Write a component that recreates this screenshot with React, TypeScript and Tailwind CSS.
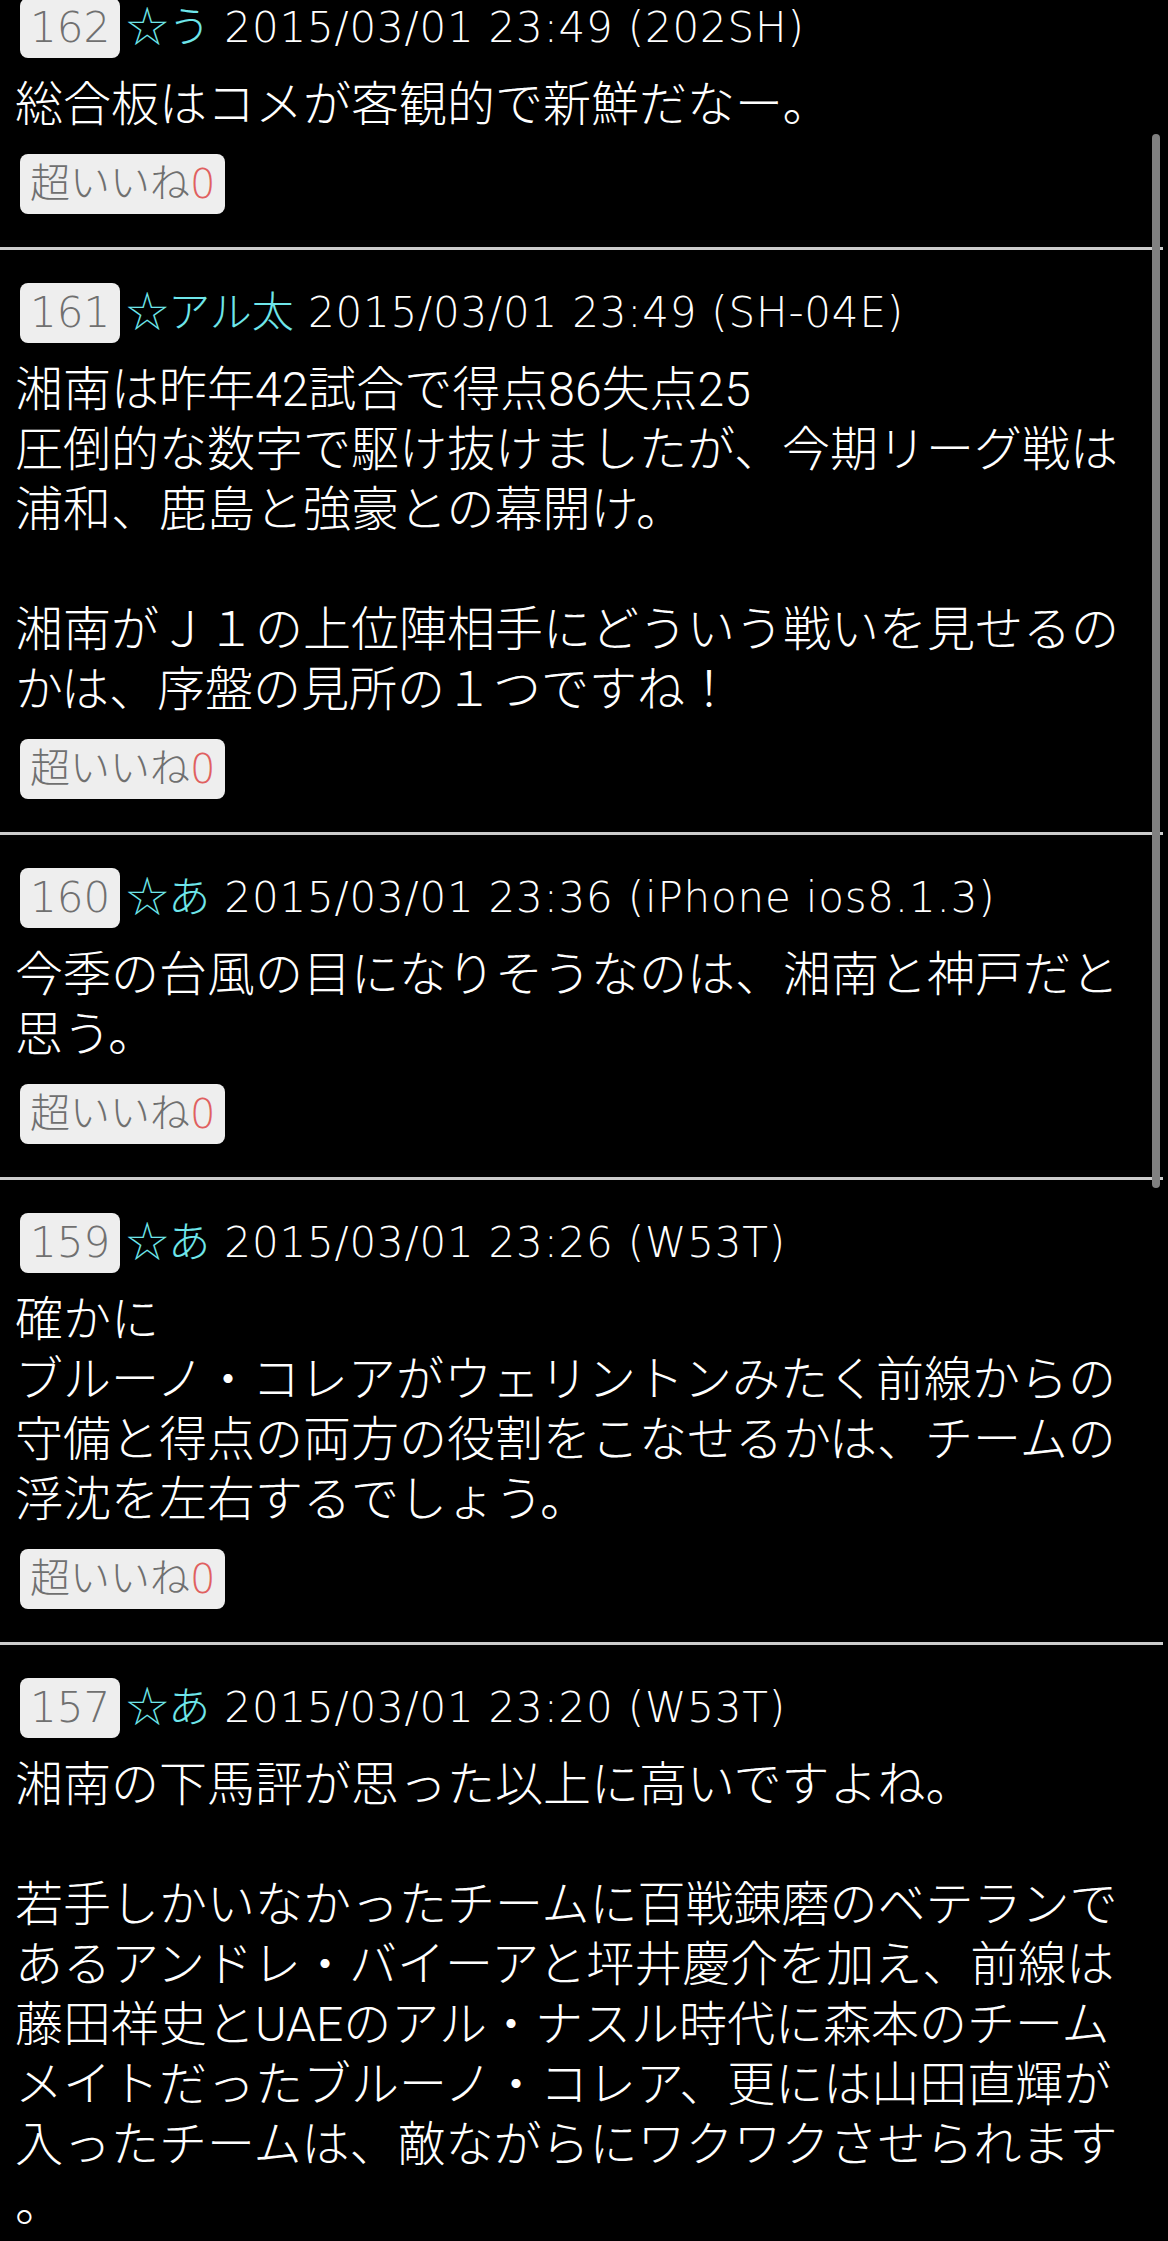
import React from "react";

interface Post {
  no: number;
  name: string;
  date: string;
  device: string;
  lines: string[];
  likes: number;
}

const posts: Post[] = [
  {
    no: 162,
    name: "う",
    date: "2015/03/01 23:49",
    device: "202SH",
    lines: ["総合板はコメが客観的で新鮮だなー。"],
    likes: 0,
  },
  {
    no: 161,
    name: "アル太",
    date: "2015/03/01 23:49",
    device: "SH-04E",
    lines: [
      "湘南は昨年42試合で得点86失点25",
      "圧倒的な数字で駆け抜けましたが、今期リーグ戦は",
      "浦和、鹿島と強豪との幕開け。",
      "",
      "湘南がＪ１の上位陣相手にどういう戦いを見せるの",
      "かは、序盤の見所の１つですね！",
    ],
    likes: 0,
  },
  {
    no: 160,
    name: "あ",
    date: "2015/03/01 23:36",
    device: "iPhone ios8.1.3",
    lines: ["今季の台風の目になりそうなのは、湘南と神戸だと", "思う。"],
    likes: 0,
  },
  {
    no: 159,
    name: "あ",
    date: "2015/03/01 23:26",
    device: "W53T",
    lines: [
      "確かに",
      "ブルーノ・コレアがウェリントンみたく前線からの",
      "守備と得点の両方の役割をこなせるかは、チームの",
      "浮沈を左右するでしょう。",
    ],
    likes: 0,
  },
  {
    no: 157,
    name: "あ",
    date: "2015/03/01 23:20",
    device: "W53T",
    lines: [
      "湘南の下馬評が思った以上に高いですよね。",
      "",
      "若手しかいなかったチームに百戦錬磨のベテランで",
      "あるアンドレ・バイーアと坪井慶介を加え、前線は",
      "藤田祥史とUAEのアル・ナスル時代に森本のチーム",
      "メイトだったブルーノ・コレア、更には山田直輝が",
      "入ったチームは、敵ながらにワクワクさせられます",
      "。",
    ],
    likes: 0,
  },
];

// header / badges use a wider latin face than the body text
const headFont = { fontFamily: '"DejaVu Sans", "Noto Sans CJK JP", sans-serif' };

const PostItem = ({ post }: { post: Post }) => {
  return (
    <div className="border-b-[3px] border-[#cccccc] px-[15px] pt-[33px] pb-[33px]">
      <div
        className="flex h-[60px] items-center whitespace-nowrap text-[42px] leading-[60px] font-light text-white"
        style={headFont}
      >
        <span className="ml-[5px] mr-[6px] flex h-[60px] items-center rounded-[8px] bg-[#eeeeee] px-[10px] text-[42px] text-[#707070]">
          {post.no}
        </span>
        <span className="text-[#6ee6ea]">☆{post.name}</span>
        <span className="tracking-[0.8px]">&nbsp;{post.date} ({post.device})</span>
      </div>
      <div className="mt-[17px] whitespace-nowrap text-[48px] leading-[60px] font-light text-white">
        {post.lines.map((line, i) => (
          <div key={i} className="h-[60px]">
            {line}
          </div>
        ))}
      </div>
      <div className="mt-[19px] flex">
        <button className="ml-[5px] flex h-[60px] items-center rounded-[8px] bg-[#eeeeee] px-[10px] text-[40px] leading-none font-light text-[#707070]">
          超いいね<span className="text-[#e06060]" style={headFont}>{post.likes}</span>
        </button>
      </div>
    </div>
  );
};

export default function App() {
  return (
    <div
      className="relative h-[2241px] w-[1168px] overflow-hidden bg-black"
      style={{ fontFamily: 'Roboto, "Noto Sans CJK JP", sans-serif' }}
    >
      <div className="-mt-[35px] w-[1163px]">
        {posts.map((p) => (
          <PostItem key={p.no} post={p} />
        ))}
      </div>
      {/* scrollbar */}
      <div className="absolute left-[1152px] top-[134px] h-[1054px] w-[8px] rounded-full bg-[#808080]" />
    </div>
  );
}
